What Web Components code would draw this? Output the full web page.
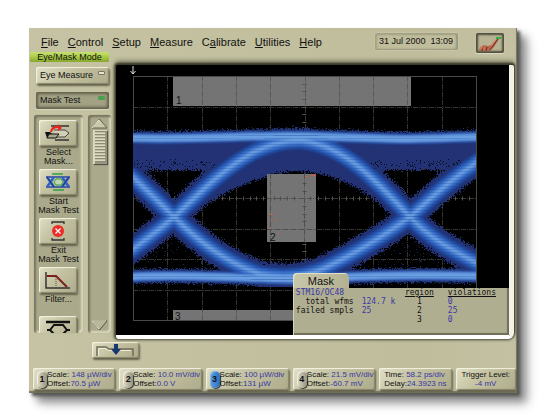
<!DOCTYPE html>
<html lang="en">
<head>
<meta charset="utf-8">
<title>Eye/Mask Mode</title>
<style>
html{height:100%}
body{margin:0;min-height:100%;box-sizing:border-box;padding:28px 33px 26px 29px;display:flex;background:#fff;color:#111;
font-family:"Liberation Sans",Arial,sans-serif;font-size:9px;line-height:9px}
</style>
</head>
<body>
<scope-window>
  <menu-bar slot="header">
    <menu-item key="F" rest="ile"></menu-item>
    <menu-item key="C" rest="ontrol"></menu-item>
    <menu-item key="S" rest="etup"></menu-item>
    <menu-item key="M" rest="easure"></menu-item>
    <menu-item pre="C" key="a" rest="librate"></menu-item>
    <menu-item key="U" rest="tilities"></menu-item>
    <menu-item key="H" rest="elp"></menu-item>
    <span slot="clock">31 Jul 2000&nbsp; 13:09</span>
  </menu-bar>
  <mode-panel slot="side">
    <span slot="title">Eye/Mask Mode</span>
    <mode-button slot="modes">Eye Measure</mode-button>
    <mode-button slot="modes" on>Mask Test</mode-button>
    <tool-button icon="open">Select<br>Mask...</tool-button>
    <tool-button icon="eye">Start<br>Mask Test</tool-button>
    <tool-button icon="exit">Exit<br>Mask Test</tool-button>
    <tool-button icon="filter">Filter...</tool-button>
    <tool-button icon="align"></tool-button>
  </mode-panel>
  <eye-display slot="main"><mask-results></mask-results></eye-display>
  <channel-readout slot="footer" n="1" a="Scale:" av="148 µW/div" b="Offset:" bv="70.5 µW"></channel-readout>
  <channel-readout slot="footer" n="2" a="Scale:" av="10.0 mV/div" b="Offset:" bv="0.0 V"></channel-readout>
  <channel-readout slot="footer" n="3" active a="Scale:" av="100 µW/div" b="Offset:" bv="131 µW"></channel-readout>
  <channel-readout slot="footer" n="4" a="Scale:" av="21.5 mV/div" b="Offset:" bv="-60.7 mV"></channel-readout>
  <channel-readout slot="footer" class="time" a="Time:" av="58.2 ps/div" b="Delay:" bv="24.3923 ns"></channel-readout>
  <channel-readout slot="footer" class="trig" a="Trigger Level:" bv="-4 mV"></channel-readout>
</scope-window>
<script>
const define = (name, html) => customElements.define(name, class extends HTMLElement {
  connectedCallback() {
    if (this.shadowRoot) return;
    this.attachShadow({mode: 'open'}).innerHTML = typeof html === 'function' ? html(this) : html;
  }
});
const at = (el, k) => el.getAttribute(k) || '';
const BTN = `button{font:inherit;color:inherit;margin:0;padding:0;border:0;background:none;box-sizing:border-box}
.raised{background:linear-gradient(135deg,#e0dfc6,#c3c1a0 45%,#aeac8c);border-radius:2px;
box-shadow:inset 1px 1px 1px #f4f3e2,inset -1px -1px 1px #85836a,1px 2px 2px #65634c}`;

define('scope-window', `<style>
:host{flex:1;display:grid;grid-template:24px 1fr auto auto/87px 1fr;background:linear-gradient(90deg,#c5c3a3,#bfbd9b 80%,#c3c1a2);
box-shadow:inset -1px -2px 1px #77755f,3px 3px 3px #555,8px 8px 8px #8a8a8a,11px 11px 11px #ccc;min-width:0}
header{grid-column:1/3}
aside{display:grid;min-height:0}
main{display:grid;min-width:0;min-height:0;padding:13px 3px 0 0}
.min{grid-column:1/3;padding:3px 0 0 63px;height:26px}
footer{grid-column:1/3;display:grid;column-gap:4px;padding:0 1px 3px 4px;height:22px;
grid-template-columns:minmax(0,83fr) minmax(0,83fr) minmax(0,84fr) minmax(0,83fr) minmax(0,73fr) minmax(0,61fr)}
${BTN}
.min button{width:47px;height:16px;display:grid;place-items:center}
</style>
<header><slot name="header"></slot></header>
<aside><slot name="side"></slot></aside>
<main><slot name="main"></slot></main>
<div class="min"><button class="raised" aria-label="Minimize results"><svg width="39" height="12" viewBox="0 0 39 12">
<path d="M1 12V3H10L13 5H37V12" fill="none" stroke="#6f6d57" stroke-width="1.5"/><path d="M2.500 12V4.500H9.500L12.500 6.500H35" fill="none" stroke="#eeecd8"/>
<path d="M18 0H22V5H25L20 11L15 5H18Z" fill="#16376f"/></svg></button></div>
<footer><slot name="footer"></slot></footer>`);

define('menu-bar', `<style>
:host{display:flex;align-items:flex-start;padding:5px 13px 0 12px;height:19px}
nav{display:flex;gap:9px;flex:1;padding-top:2px}
.clock{box-sizing:border-box;width:83px;height:17px;padding:4px;margin-right:18px;white-space:nowrap;border-radius:2px;
box-shadow:inset 2px 2px 2px #a3a184,inset -2px -1px 2px #96947a,0 0 2px #d8d6bb}
${BTN}
.touch{width:28px;height:20px;border-radius:2px;background:#b6b494;box-shadow:inset 0 0 2px 2px #4e4c3c,0 1px 1px #dddbc2}
.touch svg{display:block}
</style>
<nav><slot></slot></nav><div class="clock"><slot name="clock"></slot></div>
<button class="touch" aria-label="Touch screen on"><svg width="28" height="20" viewBox="0 0 28 20">
<path d="M3 18L4 14L8 12L12 13L15 12L21 5L23 6L18 14L14 18Z" fill="#b7664b"/>
<path d="M6 18L8 14M10 18L11 14M14 17L22 6" stroke="#702f22" fill="none"/>
<path d="M8 17V14M4 16L6 13M15 13L21 5" stroke="#dc9070"/><path d="M20 4H25V6H20Z" fill="#35b040"/></svg></button>`);

define('menu-item', el => `<style>:host{display:block}${BTN}button{font-size:11px;line-height:14px;display:block}u{text-underline-offset:1px}</style>
<button>${at(el,'pre')}<u>${at(el,'key')}</u>${at(el,'rest')}</button>`);

define('mode-panel', `<style>
:host{display:flex;flex-direction:column;min-height:0}
.title{height:10px;margin:0 7px 5px 1px;text-align:center;line-height:10px;background:linear-gradient(#c5e070,#a9cc45 50%,#85a52f);
border-radius:1px}
.modes{display:flex;flex-direction:column;gap:8px;padding:0 7px}
.row{display:flex;gap:5px;flex:1;margin-top:6px;padding:0 5px;min-height:0}
.well{box-sizing:border-box;border-radius:3px;background:#aba98b;box-shadow:inset 2px 2px 2px #77755e,inset -2px -2px 2px #d9d7bd,0 0 1px #8d8b73}
.tools{width:49px;padding:5px 5px 0;display:flex;flex-direction:column;overflow:hidden;height:218px}
.bar{width:23px;height:218px;padding:3px 3px 2px;display:flex;flex-direction:column;align-items:center}
${BTN}
.thumb{width:14px;height:34px;margin-top:1px;margin-bottom:auto;background:repeating-linear-gradient(#dddbc3 0 1px,#8d8b72 1px 2px,#c2c0a2 2px 3px);
box-shadow:inset 2px 1px #d8d6bd,inset -2px -2px #98967b,1px 1px 1px #555}
button svg{display:block}
</style>
<div class="title"><slot name="title"></slot></div>
<div class="modes"><slot name="modes"></slot></div>
<div class="row"><div class="well tools"><slot></slot></div>
<div class="well bar"><button aria-label="Scroll up"><svg width="17" height="11" viewBox="0 0 17 11"><path d="M8.500 1L16 10H1Z" fill="#cbc9ab" stroke="#646250"/><path d="M8 2L1 10" stroke="#f4f2df"/></svg></button>
<button class="thumb" aria-label="Scroll position"></button>
<button aria-label="Scroll down"><svg width="17" height="11" viewBox="0 0 17 11"><path d="M1 1H16L8.500 10Z" fill="#b9b798" stroke="#575541"/><path d="M1 1H15M1 1L8 9" stroke="#e9e7d1"/></svg></button></div></div>`);

define('mode-button', el => { const on = el.hasAttribute('on'); return `<style>:host{display:block}${BTN}
button{width:100%;height:17px;display:flex;justify-content:space-between;padding:0 4px 0 4px;line-height:17px;text-align:left;white-space:nowrap;
${on ? 'background:#a3a184;border-radius:2px;box-shadow:inset 0 0 3px 2px #605e49,0 1px 1px #d8d6bc' : ''}}
i{width:7px;height:4px;margin-top:4px;border-radius:1px;box-sizing:border-box;border:1px solid #77755f;background:#e7e5d0}
.on i{background:#34b04a;border-color:#5b9554}
</style><button class="${on ? 'on' : 'raised'}" aria-pressed="${on}"><span><slot></slot></span><i></i></button>`; });

const ICONS = {
  open: `<path d="M12 6H30M16 20H30" stroke="#333" stroke-width="1.300"/><path d="M15 10H26L30 13L26 17H16" fill="#d1cfb6" stroke="#444"/>
    <path d="M6 12H11L13 14H18V18H8Z" fill="#111"/><path d="M8 18L10 14H20L17 18Z" fill="#aaa88c" stroke="#111"/>
    <path d="M11 12Q12 5 19 6V4L23 8L19 11V8Q14 8 13 12Z" fill="#ed241c"/>`,
  eye: `<path d="M13 5H24M14 21H25" stroke="#2fa343" stroke-width="1.500"/><path d="M7 8H31M7 18H31" stroke="#2948a0" stroke-width="1.500"/>
    <path d="M8 8L15 18M15 8L8 18M23 8L30 18M30 8L23 18" stroke="#2f60c2" stroke-width="2.500"/><path d="M8 8L15 18M30 8L23 18" stroke="#173579"/>
    <path d="M17 10H22L24 13L22 16H17L15 13Z" fill="#c3d3aa" stroke="#2fa343"/>`,
  exit: `<path d="M13 6V4H25V6M13 20V22H25V20" fill="none" stroke="#333" stroke-width="1.300"/><circle cx="19" cy="13" r="6" fill="#ee2b25"/>
    <path d="M16.500 10.500L21.500 15.500M21.500 10.500L16.500 15.500" stroke="#fff" stroke-width="1.300"/>`,
  filter: `<path d="M7 5V21H31" fill="none" stroke="#333" stroke-width="1.500"/><path d="M8 9H17L28 20" fill="none" stroke="#7c211d" stroke-width="2"/>
    <path d="M17 10V20" stroke="#555" stroke-dasharray="1 1"/>`,
  align: `<path d="M7 6H31" stroke="#111" stroke-width="2.500"/><path d="M8 14H11L15 9H24L28 14H31M11 14L15 18H24L28 14" fill="none" stroke="#111" stroke-width="2"/>`
};
define('tool-button', el => `<style>:host{display:flex;flex-direction:column;flex:none;width:39px;height:49px}${BTN}
button{display:block;flex:none;width:38px;height:26px;background:radial-gradient(circle at 70% 45%,#e4e2cf,#cbc9ac 55%,#aaa889)}
svg{display:block}
label{display:block;padding-top:2px;text-align:center;white-space:nowrap;margin:0 -4px}
</style><button id="b" class="raised" aria-label="${el.textContent || 'Align'}"><svg width="38" height="26" viewBox="0 0 38 26">${ICONS[at(el,'icon')]}</svg></button><label for="b"><slot></slot></label>`);

function grid() {
  let d = '', t = '';
  for (let i = 0; i <= 10; i++) { const x = Math.round(133 + i * 34.3) + .5; d += `M${x} 76V320`; }
  for (let i = 0; i <= 8; i++) { const y = Math.round(76 + i * 30.5) + .5; d += `M133 ${y}H476`; }
  for (let i = 1; i < 50; i++) { const x = Math.round(133 + i * 6.86) + .5; t += `M${x} 196.500v4`; }
  for (let i = 1; i < 32; i++) { const y = Math.round(76 + i * 7.625) + .5; t += `M302.500 ${y}h4`; }
  return `<path d="${d}" stroke="#4b4d45" stroke-dasharray="5 1 1 1" opacity=".7"/><path d="${t}" stroke="#55574f"/><path d="M133.500 76.500H476.500V320.500H133.500Z" stroke="#484a44"/>`;
}
const RISE = 'M120 259C138 245 158 231 174 217C199 194 222 169 254 152Q281 139 304 141C344 147 372 176 410 217C433 241 454 251 486 268';
const FALL = 'M120 166C138 181 156 199 174 217C202 245 229 264 260 274Q295 281 325 268C362 250 385 235 410 217C434 195 456 175 486 156';
const TOP = 'M130 138C200 140 250 135 300 136S380 139 410 139S460 137 480 137';
const BOT = 'M130 277C160 275 200 276 250 278S300 280 330 278S400 274 480 276';
const strokes = (c, w, rw) => `<path d="${RISE}" stroke="${c}" stroke-width="${w}"/><path d="${FALL}" stroke="${c}" stroke-width="${w}"/><path d="${TOP}" stroke="${c}" stroke-width="${rw}"/><path d="${BOT}" stroke="${c}" stroke-width="${rw}"/>`;
const specks = () => {
  let s = 7, o = ''; const r = () => (s = (s * 16807) % 2147483647) / 2147483647;
  const dot = (x, y, c) => `<path d="M${x | 0} ${y | 0}h1v1h-1z" fill="${c}"/>`;
  for (let i = 0; i < 260; i++) {
    const x = 134 + r() * 341, y = 159 + (r() + r()) * 5;
    if (x < 215 || x > 370) o += dot(x, y, '#070b21');
  }
  for (let i = 0; i < 130; i++) {
    const c = r() < .5 ? 174 : 411; o += dot(c - 35 + r() * 65, 238 + r() * 28, '#172554');
  }
  return o;
};
define('eye-display', `<style>
:host{position:relative;display:block;background:#000;border-right:5px solid #f3f2e8;border-bottom:4px solid #fff;border-radius:2px 2px 6px 3px;
box-shadow:0 -1px 2px 1px #3b392b,-1px 0 3px 1px #5b5946,0 -4px 5px #77755e;min-width:0;min-height:0}
svg{display:block;width:100%;height:100%}
.over{position:absolute;right:0;bottom:0;width:55%}
text{font-size:10px;fill:#111}
</style>
<svg viewBox="116 65 393 270" fill="none" role="img" aria-label="Eye diagram with mask regions">
<defs><clipPath id="c"><path d="M133 76H476V320H133Z"/></clipPath>
<filter id="r" x="-5%" y="-5%" width="110%" height="110%"><feTurbulence type="fractalNoise" baseFrequency=".7" numOctaves="2" seed="4"/><feDisplacementMap in="SourceGraphic" scale="10" xChannelSelector="R" yChannelSelector="G"/></filter>
<filter id="s" x="-5%" y="-5%" width="110%" height="110%"><feGaussianBlur stdDeviation="1"/></filter>
<pattern id="l" width="4" height="3" patternUnits="userSpaceOnUse"><path d="M0 .500H4" stroke="#123d8c" stroke-opacity=".3"/></pattern></defs>
<path d="M173 77H411V106H173ZM173 310H476V320H173Z" fill="#747474"/>
<path d="M133 66V74M130.500 71L133 74L135.500 71" stroke="#ddd"/>
${grid()}
<g clip-path="url(#c)">
<g filter="url(#r)"><path d="M120 132H490V170H374L390 211Q342 171 296 171Q250 174 192 214L212 170H120Z" fill="#223375"/>${strokes('#223375', 26, 14)}</g>
${specks()}
<g filter="url(#s)">${strokes('#2450a8', 16, 10)}${strokes('#3a72cd', 10, 8)}${strokes('#6a9fe2', 4, 6)}</g>
<g opacity=".7">${strokes('url(#l)', 17, 3)}</g>
</g>
<path d="M267 174H316V242H267Z" fill="#747474"/><path d="M270.500 174V242M304.500 174V242M267 198.500H316M267 229.500H316" stroke="#4e504b" stroke-dasharray="5 1 1 1"/>
<path d="M302.500 183.500h4M302.500 191.500h4M302.500 206.500h4M302.500 214.500h4M302.500 221.500h4M274.500 196.500v4M280.500 196.500v4M287.500 196.500v4M294.500 196.500v4M310.500 196.500v4" stroke="#4e504b"/>
<path d="M311 175.500h4M305 176.500h2M314.500 174v3M270 214.500h3M271 218.500h1M275 219.500h2M278 232.500h1M270 228.500h1" stroke="#e2553a"/>
<text x="176" y="104">1</text><text x="270" y="241">2</text><text x="175" y="320">3</text>
</svg><div class="over"><slot></slot></div>`);

define('mask-results', `<style>
:host{display:block;font-family:"DejaVu Sans Mono","Liberation Mono",monospace;font-size:8px;line-height:9px}
h2{margin:0;width:56px;height:15px;box-sizing:border-box;text-align:center;font:11px/16px "Liberation Sans",Arial,sans-serif;
background:linear-gradient(90deg,#c9c7a9,#b3b192);border-radius:4px 5px 0 0;box-shadow:inset 1px 1px #e2e0c8}
.body{display:flex;justify-content:space-between;height:47px;padding:0 13px 0 3px;background:#b0ae90;box-shadow:inset 1px 0 #d6d4ba,inset -2px -2px 1px #706e58}
table{border-collapse:collapse;height:max-content}
td,th{padding:0;font-weight:400;text-align:left;height:9px;white-space:nowrap}
.v{color:#3a39a8}
.l th{text-align:right;padding-right:8px}
.r td,.r th{padding-right:14px;text-align:center}.r th:last-child,.r td:last-child{padding-right:0;text-align:left}
</style>
<h2>Mask</h2>
<div class="body"><table class="l"><tr><th class="v">STM16/OC48</th><td></td></tr><tr><th>total wfms</th><td class="v">124.7 k</td></tr><tr><th>failed smpls</th><td class="v">25</td></tr></table>
<table class="r"><tr><th><u>region</u></th><th><u>violations</u></th></tr><tr><td>1</td><td class="v">0</td></tr><tr><td>2</td><td class="v">25</td></tr><tr><td>3</td><td class="v">0</td></tr></table></div>
<style>.l th.v{text-align:left}</style>`);

define('channel-readout', el => { const n = at(el,'n'); return `<style>
:host{display:grid;min-width:0}${BTN}
button{display:flex;align-items:center;font-size:8px;white-space:nowrap;text-align:left;${n ? 'padding-left:4px' : 'justify-content:center'}}
b{flex:none;width:10px;height:17px;line-height:17px;border-radius:5px;text-align:center;font-size:9px;
background:linear-gradient(90deg,#dddbc6,#96947e);box-shadow:1px 1px 1px #33322a,inset 1px 1px #eee}
:host([active]) b{background:linear-gradient(90deg,#5c9fe5,#2f70bf);box-shadow:1px 1px 1px #234,inset 1px 1px #84b8ed}
.t span{display:block}em{font-style:normal;color:#3836a5}
:host(.trig) .t{text-align:center}
</style><button class="raised">${n ? `<b>${n}</b>` : ''}<span class="t"><span>${at(el,'a')} <em>${at(el,'av')}</em></span><span>${at(el,'b')}<em>${at(el,'bv')}</em></span></span></button>`; });
</script>
</body>
</html>
